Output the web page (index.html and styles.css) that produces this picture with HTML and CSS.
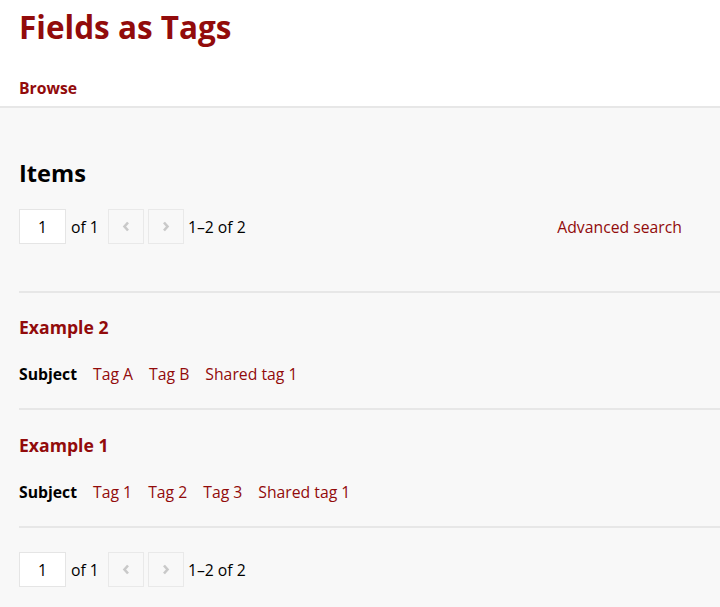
FILE: index.html
```html
<!DOCTYPE html>
<html lang="en">
<head>
    <meta charset="UTF-8">
    <title>Items · Fields as Tags</title>
    <link rel="stylesheet" href="styles.css">
</head>
<body>
    <header class="site-header">
        <h1 class="site-title"><a href="#">Fields as Tags</a></h1>
        <nav class="site-nav">
            <a href="#">Browse</a>
        </nav>
    </header>
    <div class="content">
        <h2 class="page-title">Items</h2>
        <div class="browse-controls">
            <nav class="pagination">
                <input class="page-input" type="text" value="1">
                <span class="of">of 1</span>
                <span class="page-btn">
                    <svg width="8" height="11" viewBox="0 0 8 11"><path d="M6 1.5 L2.5 5.5 L6 9.5" fill="none" stroke="#c9c9c9" stroke-width="2.6"/></svg>
                </span>
                <span class="page-btn">
                    <svg width="8" height="11" viewBox="0 0 8 11"><path d="M2 1.5 L5.5 5.5 L2 9.5" fill="none" stroke="#c9c9c9" stroke-width="2.6"/></svg>
                </span>
                <span class="count">1–2 of 2</span>
            </nav>
            <a class="advanced" href="#">Advanced search</a>
        </div>
        <ul class="resource-list">
            <li class="resource">
                <h4><a href="#">Example 2</a></h4>
                <div class="tags">
                    <span class="tag-label">Subject</span>
                    <a href="#">Tag A</a>
                    <a href="#">Tag B</a>
                    <a href="#">Shared tag 1</a>
                </div>
            </li>
            <li class="resource">
                <h4><a href="#">Example 1</a></h4>
                <div class="tags">
                    <span class="tag-label">Subject</span>
                    <a href="#">Tag 1</a>
                    <a href="#">Tag 2</a>
                    <a href="#">Tag 3</a>
                    <a href="#">Shared tag 1</a>
                </div>
            </li>
        </ul>
        <nav class="pagination bottom">
            <input class="page-input" type="text" value="1">
            <span class="of">of 1</span>
            <span class="page-btn">
                <svg width="8" height="11" viewBox="0 0 8 11"><path d="M6 1.5 L2.5 5.5 L6 9.5" fill="none" stroke="#c9c9c9" stroke-width="2.6"/></svg>
            </span>
            <span class="page-btn">
                <svg width="8" height="11" viewBox="0 0 8 11"><path d="M2 1.5 L5.5 5.5 L2 9.5" fill="none" stroke="#c9c9c9" stroke-width="2.6"/></svg>
            </span>
            <span class="count">1–2 of 2</span>
        </nav>
    </div>
</body>
</html>
```

FILE: styles.css
```css
* {
    box-sizing: border-box;
    margin: 0;
    padding: 0;
}
body {
    font-family: "Open Sans", "Liberation Sans", sans-serif;
    font-size: 15.75px;
    color: #000;
    background: #f8f8f8;
}
a {
    color: #920b0b;
    text-decoration: none;
}

.site-header {
    background: #fff;
    border-bottom: 2px solid #e7e7e7;
    padding: 0 19px;
}
.site-title {
    font-size: 31.5px;
    font-weight: 700;
    line-height: 54px;
}
.site-nav {
    padding: 22px 0 6px;
}
.site-nav a {
    font-weight: 700;
    font-size: 15.75px;
    line-height: 24px;
}

.content {
    padding: 0 0 0 19px;
}
.page-title {
    font-size: 23.6px;
    font-weight: 700;
    line-height: 36px;
    margin-top: 47px;
}
.browse-controls {
    display: flex;
    align-items: center;
    justify-content: space-between;
    margin-top: 18px;
    padding-right: 38px;
    line-height: 24px;
}
.pagination {
    display: flex;
    align-items: center;
    line-height: 24px;
}
.page-input {
    width: 47px;
    height: 35px;
    border: 1px solid #e5e5e5;
    background: #fff;
    font-family: inherit;
    font-size: 15.75px;
    text-align: center;
    color: #000;
}
.of {
    margin: 0 9px 0 5px;
}
.page-btn {
    display: flex;
    align-items: center;
    justify-content: center;
    width: 36px;
    height: 35px;
    border: 1px solid #e9e9e9;
    margin-right: 4px;
}
.advanced {
    font-size: 15.75px;
}

.resource-list {
    list-style: none;
    margin-top: 47px;
    border-top: 2px solid #e7e7e7;
}
.resource {
    border-bottom: 2px solid #e7e7e7;
    padding: 22px 0 22px;
}
.resource + .resource {
    padding-top: 23px;
}
.resource h4 {
    font-size: 17.6px;
    font-weight: 700;
    line-height: 24px;
}
.tags {
    display: flex;
    gap: 16px;
    margin-top: 23px;
    line-height: 24px;
}
.tag-label {
    font-weight: 700;
}
.pagination.bottom {
    margin-top: 24px;
}
```
